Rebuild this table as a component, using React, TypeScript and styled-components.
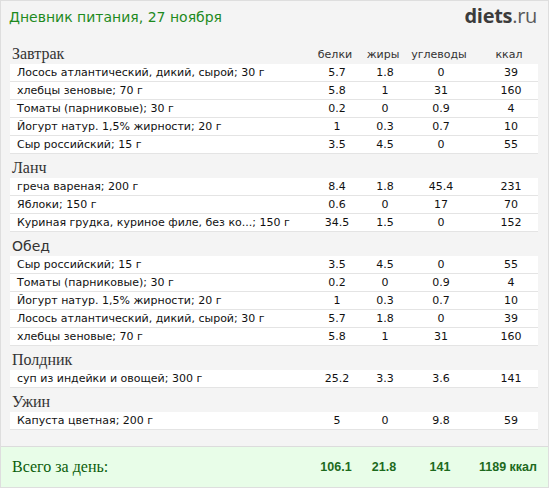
import React from "react";
import styled, { createGlobalStyle } from "styled-components";

interface FoodRow {
  name: string;
  protein: string;
  fat: string;
  carbs: string;
  kcal: string;
}

interface Meal {
  title: string;
  sans?: boolean;
  showHead?: boolean;
  items: FoodRow[];
}

const row = (name: string, protein: string, fat: string, carbs: string, kcal: string): FoodRow => ({
  name,
  protein,
  fat,
  carbs,
  kcal,
});

const meals: Meal[] = [
  {
    title: "Завтрак",
    showHead: true,
    items: [
      row("Лосось атлантический, дикий, сырой; 30 г", "5.7", "1.8", "0", "39"),
      row("хлебцы зеновые; 70 г", "5.8", "1", "31", "160"),
      row("Томаты (парниковые); 30 г", "0.2", "0", "0.9", "4"),
      row("Йогурт натур. 1,5% жирности; 20 г", "1", "0.3", "0.7", "10"),
      row("Сыр российский; 15 г", "3.5", "4.5", "0", "55"),
    ],
  },
  {
    title: "Ланч",
    items: [
      row("греча вареная; 200 г", "8.4", "1.8", "45.4", "231"),
      row("Яблоки; 150 г", "0.6", "0", "17", "70"),
      row("Куриная грудка, куриное филе, без ко...; 150 г", "34.5", "1.5", "0", "152"),
    ],
  },
  {
    title: "Обед",
    sans: true,
    items: [
      row("Сыр российский; 15 г", "3.5", "4.5", "0", "55"),
      row("Томаты (парниковые); 30 г", "0.2", "0", "0.9", "4"),
      row("Йогурт натур. 1,5% жирности; 20 г", "1", "0.3", "0.7", "10"),
      row("Лосось атлантический, дикий, сырой; 30 г", "5.7", "1.8", "0", "39"),
      row("хлебцы зеновые; 70 г", "5.8", "1", "31", "160"),
    ],
  },
  {
    title: "Полдник",
    items: [row("суп из индейки и овощей; 300 г", "25.2", "3.3", "3.6", "141")],
  },
  {
    title: "Ужин",
    items: [row("Капуста цветная; 200 г", "5", "0", "9.8", "59")],
  },
];

const GlobalStyle = createGlobalStyle`
  body {
    margin: 0;
    background: #ffffff;
  }
`;

const Frame = styled.div`
  width: 549px;
  height: 488px;
  box-sizing: border-box;
  border: 1px solid #dedede;
  background: #f4f4f4;
  display: flex;
  flex-direction: column;
`;

const Header = styled.div`
  height: 39px;
  box-sizing: border-box;
  display: flex;
  justify-content: space-between;
  align-items: flex-start;
  padding: 6px 11px 0 8px;
`;

const Title = styled.h1`
  margin: 0;
  font-family: "DejaVu Sans", Verdana, sans-serif;
  font-size: 14px;
  line-height: 20px;
  font-weight: normal;
  color: #1e8a1e;
`;

const Logo = styled.div`
  font-family: "Open Sans", "Liberation Sans", sans-serif;
  font-size: 20px;
  line-height: 18px;
  font-weight: 700;
  color: #3c3c3c;
  letter-spacing: -0.3px;
  span {
    font-weight: 400;
    color: #5a5a5a;
  }
`;

const Body = styled.div`
  padding: 0 10px 0 9px;
`;

const Grid = styled.div`
  display: grid;
  grid-template-columns: 1fr 48px 48px 64px 65px;
  align-items: center;
`;

const SectionHead = styled(Grid)`
  height: 24px;
  align-items: end;
  padding-bottom: 1px;
  box-sizing: border-box;
`;

const SectionTitle = styled.div<{ $sans?: boolean }>`
  padding-left: 2px;
  font-family: ${(p) => (p.$sans ? `"DejaVu Sans", Verdana, sans-serif` : `"Liberation Serif", serif`)};
  font-size: ${(p) => (p.$sans ? "14px" : "16px")};
  color: #333333;
  line-height: 18px;
`;

const ColHead = styled.div<{ $last?: boolean }>`
  font-family: "DejaVu Sans", Verdana, sans-serif;
  font-size: 11px;
  color: #333333;
  text-align: center;
  padding-right: 4px;
  padding-left: ${(p) => (p.$last ? "11px" : "0")};
  line-height: 16px;
`;

const ItemRow = styled(Grid)`
  height: 18px;
  box-sizing: border-box;
  background: #ffffff;
  border-bottom: 1px solid #e4e4e4;
  font-family: "DejaVu Sans", Verdana, sans-serif;
  font-size: 11px;
  color: #111111;
`;

const Name = styled.div`
  padding-left: 7px;
  white-space: nowrap;
  overflow: hidden;
`;

const Num = styled.div<{ $last?: boolean }>`
  text-align: center;
  padding-left: ${(p) => (p.$last ? "11px" : "0")};
`;

const Totals = styled(Grid)`
  margin-top: auto;
  height: 41px;
  box-sizing: border-box;
  background: #e8fde8;
  border-top: 1px solid #dcdcdc;
  padding: 0 11px 0 9px;
`;

const TotalLabel = styled.div`
  font-family: "Liberation Serif", serif;
  font-size: 16px;
  color: #0b5e0b;
  padding-left: 2px;
`;

const TotalNum = styled.div<{ $right?: boolean }>`
  font-family: "Liberation Sans", Arial, sans-serif;
  font-size: 12.5px;
  font-weight: bold;
  color: #1d6a1d;
  text-align: ${(p) => (p.$right ? "right" : "center")};
  white-space: nowrap;
`;

const App = () => {
  return (
    <>
      <GlobalStyle />
      <Frame>
        <Header>
          <Title>Дневник питания, 27 ноября</Title>
          <Logo>
            diets<span>.ru</span>
          </Logo>
        </Header>
        <Body>
          {meals.map((meal) => (
            <div key={meal.title}>
              <SectionHead>
                <SectionTitle $sans={meal.sans}>{meal.title}</SectionTitle>
                {meal.showHead && (
                  <>
                    <ColHead>белки</ColHead>
                    <ColHead>жиры</ColHead>
                    <ColHead>углеводы</ColHead>
                    <ColHead $last>ккал</ColHead>
                  </>
                )}
              </SectionHead>
              {meal.items.map((item, i) => (
                <ItemRow key={i}>
                  <Name>{item.name}</Name>
                  <Num>{item.protein}</Num>
                  <Num>{item.fat}</Num>
                  <Num>{item.carbs}</Num>
                  <Num $last>{item.kcal}</Num>
                </ItemRow>
              ))}
            </div>
          ))}
        </Body>
        <Totals>
          <TotalLabel>Всего за день:</TotalLabel>
          <TotalNum>106.1</TotalNum>
          <TotalNum>21.8</TotalNum>
          <TotalNum>141</TotalNum>
          <TotalNum $right>1189 ккал</TotalNum>
        </Totals>
      </Frame>
    </>
  );
};

export default App;
